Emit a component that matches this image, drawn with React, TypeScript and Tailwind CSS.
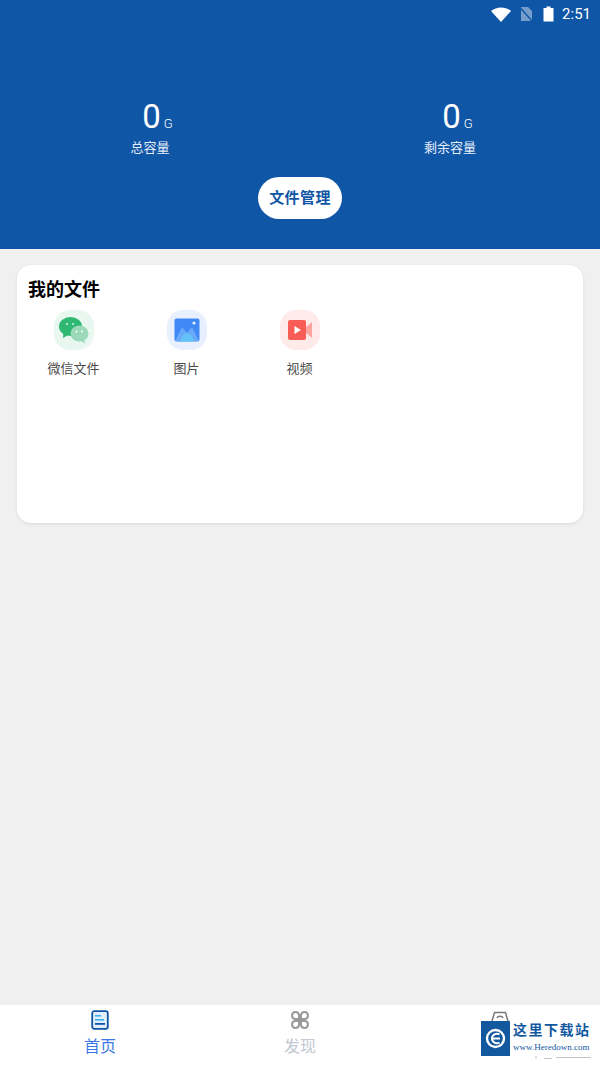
import type { ReactNode } from 'react';

const FONT = "font-['Roboto','Noto_Sans_CJK_SC',sans-serif]";

function StatusBar() {
    return (
        <div className="h-7 flex items-center justify-end pr-[9px] text-white">
            <svg width="20" height="15" viewBox="0 0 20 15" className="mr-[8px]">
                <path d="M0 4C6 -0.8 14 -0.8 20 4L10 15Z" fill="#fff" />
            </svg>
            <svg width="14" height="16" viewBox="0 0 14 16" className="mr-[10px]" opacity="0.42">
                <path d="M2 1H9L13 5V15H2Z" fill="#fff" />
                <path d="M1 1.5L13.5 15.5" stroke="#1056a6" strokeWidth="1.4" />
            </svg>
            <svg width="11" height="16" viewBox="0 0 11 16" className="mr-[8px]">
                <path d="M3.5 0.5H7.5V2H10.5V15.5H0.5V2H3.5Z" fill="#fff" />
            </svg>
            <span className="text-[15px] leading-none font-['Roboto',sans-serif]">2:51</span>
        </div>
    );
}

function Stat({ label }: { label: string }) {
    return (
        <div className="flex flex-col items-center">
            <div className="flex items-baseline h-[36px] pl-[15px]">
                <span className="text-[33px] leading-[36px] text-white font-['Roboto',sans-serif]">0</span>
                <span className="text-[13px] ml-[3px] font-light text-white font-['Roboto',sans-serif]">G</span>
            </div>
            <div className="mt-[3px] text-[13px] leading-[20px] text-[#e6eefa]">{label}</div>
        </div>
    );
}

function FileItem({ icon, bg, label }: { icon: ReactNode; bg: string; label: string }) {
    return (
        <div className="w-[113px] flex flex-col items-center">
            <div className={`w-10 h-10 rounded-[16px] flex items-center justify-center ${bg}`}>{icon}</div>
            <div className="mt-[9px] text-[13px] leading-[20px] text-[#4a4a4a]">{label}</div>
        </div>
    );
}

function WechatIcon() {
    return (
        <svg width="32" height="28" viewBox="0 0 32 28">
            <ellipse cx="12.5" cy="10.5" rx="11.5" ry="9.5" fill="#2fb872" />
            <path d="M5.5 16.5L5 22L11 18.5Z" fill="#2fb872" />
            <ellipse cx="21.5" cy="17.5" rx="9" ry="8" fill="#9bd9b9" />
            <path d="M26 23L27 27.5L22 24.5Z" fill="#9bd9b9" />
            <circle cx="9" cy="8" r="1" fill="#d8f5e6" />
            <circle cx="15" cy="8" r="1" fill="#d8f5e6" />
            <circle cx="18.5" cy="15.5" r="0.9" fill="#fff" />
            <circle cx="24" cy="15.5" r="0.9" fill="#fff" />
        </svg>
    );
}

function PictureIcon() {
    return (
        <svg width="26" height="24" viewBox="0 0 26 24">
            <rect x="0.5" y="0.5" width="25" height="23" rx="2" fill="#3f88f5" />
            <path d="M1 23L8 9L13 15L18 9L25 23Z" fill="#6aa8fa" />
            <path d="M6 23.5C8 17 11 15 13 15C15 15 18 17 20 23.5Z" fill="#63c3f7" />
            <circle cx="20" cy="5" r="1.6" fill="#e5f1ff" />
        </svg>
    );
}

function VideoIcon() {
    return (
        <svg width="24" height="20" viewBox="0 0 24 20">
            <path d="M16 9L24 2V18L16 11Z" fill="#fca5a0" />
            <rect x="0" y="0" width="18" height="20" rx="2" fill="#f85c57" />
            <path d="M6.5 6L13 10L6.5 14Z" fill="#fff" />
        </svg>
    );
}

export default function App() {
    return (
        <div className={`w-[600px] h-[1067px] bg-[#f0f0f0] flex flex-col overflow-hidden ${FONT}`}>
            {/* Header */}
            <div className="h-[249px] bg-[#1056a6]">
                <StatusBar />
                <div className="grid grid-cols-2 mt-[71px]">
                    <Stat label="总容量" />
                    <Stat label="剩余容量" />
                </div>
                <div className="flex justify-center mt-[19px]">
                    <div className="w-[84px] h-[42px] rounded-full bg-white flex items-center justify-center text-[15px] tracking-[0.4px] font-bold text-[#1056a6]">
                        文件管理
                    </div>
                </div>
            </div>

            {/* My files */}
            <div className="mx-[17px] mt-[16px] h-[258px] bg-white rounded-[14px] shadow-[0_1px_3px_rgba(0,0,0,0.1)] pl-[11px] pt-[12px]">
                <div className="text-[18px] leading-[24px] font-bold text-black pt-[1px]">我的文件</div>
                <div className="flex mt-[8px] -ml-[11px]">
                    <FileItem bg="bg-[#e8f7ef]" icon={<WechatIcon />} label="微信文件" />
                    <FileItem bg="bg-[#e8f0ff]" icon={<PictureIcon />} label="图片" />
                    <FileItem bg="bg-[#ffeaea]" icon={<VideoIcon />} label="视频" />
                </div>
            </div>

            <div className="flex-1" />

            {/* Tab bar */}
            <div className="relative h-[62px] bg-white grid grid-cols-3">
                <div className="flex flex-col items-center pt-[5px]">
                    <svg width="18" height="20" viewBox="0 0 18 20">
                        <rect x="1.2" y="1.2" width="15.6" height="17.6" rx="2" fill="#e3eefa" stroke="#1056a6" strokeWidth="1.8" />
                        <rect x="4" y="5" width="6" height="1.6" fill="#37b5f0" />
                        <rect x="4" y="9" width="9" height="1.6" fill="#37b5f0" />
                        <rect x="4" y="13" width="10" height="1.8" fill="#1056a6" />
                    </svg>
                    <span className="mt-[6px] text-[16px] leading-[22px] text-[#3a78e6]">首页</span>
                </div>
                <div className="flex flex-col items-center pt-[5px]">
                    <svg width="20" height="20" viewBox="0 0 20 20" fill="none" stroke="#9a9a9a" strokeWidth="2">
                        <path d="M9 9H5a3.5 3.5 0 1 1 4-4Z" />
                        <path d="M11 9h4a3.5 3.5 0 1 0-4-4Z" />
                        <path d="M9 11H5a3.5 3.5 0 1 0 4 4Z" />
                        <path d="M11 11h4a3.5 3.5 0 1 1-4 4Z" />
                    </svg>
                    <span className="mt-[6px] text-[16px] leading-[22px] text-[#c3c8d2]">发现</span>
                </div>
                <div className="flex justify-center pt-[6px]">
                    <svg width="20" height="10" viewBox="0 0 20 10" fill="none" stroke="#777" strokeWidth="1.5">
                        <path d="M2 10L4.5 1.5H15.5L18 10" />
                        <path d="M7 7C8 4.5 12 4.5 13 7" />
                    </svg>
                </div>

                {/* Watermark */}
                <div className="absolute left-[481px] top-[16px] w-[119px] h-[35px] bg-white flex">
                    <div className="w-[29px] h-[35px] bg-[#12589f] flex items-center justify-center">
                        <svg width="21" height="21" viewBox="0 0 21 21" fill="none" stroke="#fff">
                            <circle cx="10.5" cy="10.5" r="8.5" strokeWidth="2.4" />
                            <path d="M15 10.5H7M14.5 6.5C11 4.5 7 7 7 10.5C7 14 11 16.5 14.5 14.5" strokeWidth="2" />
                        </svg>
                    </div>
                    <div className="flex-1 pl-[3px] flex flex-col items-start text-[#12589f]">
                        <span className="text-[14px] leading-[18px] mt-[-1px] tracking-[1.5px] font-bold font-['Noto_Sans_CJK_SC',serif]">这里下载站</span>
                        <span className="mt-[4px] text-[9px] leading-[11px] whitespace-nowrap font-['Liberation_Serif',serif]">www.Heredown.com</span>
                    </div>
                </div>
                {/* Clipped label under the watermark */}
                <svg width="60" height="4" viewBox="0 0 60 4" className="absolute left-[535px] top-[51px]" fill="none" stroke="#c4c4c4">
                    <path d="M1 0V3M9 2.5H17M21 1.5H56" strokeWidth="1" />
                </svg>
            </div>
        </div>
    );
}
